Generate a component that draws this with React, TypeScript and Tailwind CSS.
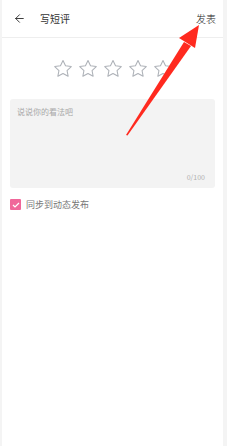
import { ArrowLeft } from "lucide-react";

function Star() {
  return (
    <svg width="20" height="19" viewBox="0 0 24 23" fill="none">
      <path
        d="M12 1.8l3.05 6.4 6.95.9-5.1 4.85 1.3 6.9L12 17.5l-6.2 3.35 1.3-6.9L2 9.1l6.95-.9L12 1.8z"
        stroke="#aeb2b8"
        strokeWidth="1.3"
        strokeLinejoin="round"
      />
    </svg>
  );
}

export default function App() {
  return (
    <div
      className="relative h-[446px] w-[227px] overflow-hidden bg-[#f4f4f4]"
      style={{ fontFamily: '"Noto Sans CJK SC", "Noto Sans", sans-serif' }}
    >
      <div className="ml-[2px] flex h-full w-[221px] flex-col bg-white">
        <div className="flex h-[38px] items-center border-b border-[#eeeeee] pl-[11px] pr-[7px]">
          <ArrowLeft size={13} strokeWidth={1.6} className="text-[#222]" />
          <span className="ml-[14px] text-[10px] text-[#333]">写短评</span>
          <span className="ml-auto text-[10px] font-light text-[#222]">发表</span>
        </div>

        <div className="mt-[21px] flex justify-center gap-[5px] pl-[1px]">
          <Star />
          <Star />
          <Star />
          <Star />
          <Star />
        </div>

        <div className="mx-[8px] mt-[21px] flex h-[89px] flex-col rounded-[3px] bg-[#f3f3f3] px-[7px] pt-[7px] pb-[6px]">
          <span className="text-[8px] text-[#a8a8a8]">说说你的看法吧</span>
          <span className="mt-auto self-end pr-[3px] text-[7px] text-[#b0b0b0]">0/100</span>
        </div>

        <div className="mt-[10px] flex items-center pl-[8px]">
          <div className="flex h-[11px] w-[11px] items-center justify-center rounded-[1px] bg-[#f0679a]">
            <svg width="8" height="6" viewBox="0 0 8 6" fill="none">
              <path d="M1 3l2 2 4-4" stroke="white" strokeWidth="1.2" />
            </svg>
          </div>
          <span className="ml-[5px] text-[9px] text-[#777]">同步到动态发布</span>
        </div>
      </div>

      <svg
        className="pointer-events-none absolute left-0 top-0"
        width="227"
        height="446"
        viewBox="0 0 227 446"
      >
        <path d="M126 135 L184 42 L191 46 L127.5 135.5 Z" fill="#ff2a1f" />
        <path d="M199 25 L179 38 L195 48 Z" fill="#ff2a1f" />
      </svg>
    </div>
  );
}
